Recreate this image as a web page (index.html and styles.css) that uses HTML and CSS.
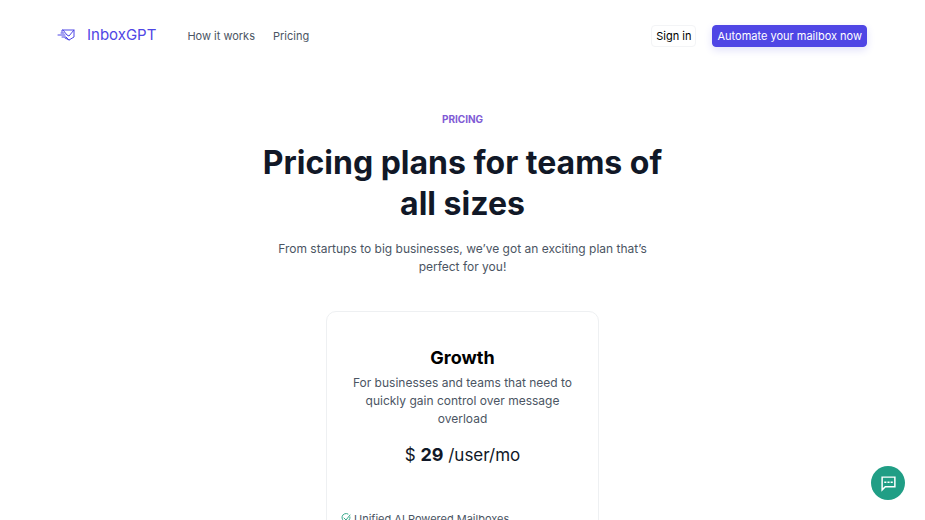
FILE: index.html
```html
<!DOCTYPE html>
<html lang="en">
<head>
    <meta charset="UTF-8">
    <meta name="viewport" content="width=device-width, initial-scale=1.0">
    <title>InboxGPT - Pricing</title>
    <link rel="stylesheet" href="styles.css">
</head>
<body>
    <header class="navbar">
        <a class="brand" href="#">
            <svg class="brand-icon" viewBox="0 0 18 12" fill="none" stroke="currentColor" stroke-linejoin="round" stroke-linecap="round" aria-hidden="true">
                <path d="M5 3V1h12v7l-5 3-4-2"/>
                <path d="M6 1l4 5 2 1 5-6"/>
                <path d="M1 6h7M4 4h3M5 8h4l3 3"/>
            </svg>
            <span>InboxGPT</span>
        </a>
        <nav class="nav-links">
            <a href="#how">How it works</a>
            <a href="#pricing">Pricing</a>
        </nav>
        <div class="nav-actions">
            <button class="btn btn-light" type="button">Sign in</button>
            <button class="btn btn-primary" type="button">Automate your mailbox now</button>
        </div>
    </header>

    <main id="pricing" class="pricing">
        <p class="eyebrow">Pricing</p>
        <h1>Pricing plans for teams of all sizes</h1>
        <p class="lead">From startups to big businesses, we’ve got an exciting plan that’s perfect for you!</p>

        <section class="plan">
            <h2>Growth</h2>
            <p class="plan-text">For businesses and teams that need to quickly gain control over message overload</p>
            <p class="price">$ <strong>29</strong> /user/mo</p>
            <ul class="features">
                <li>
                    <svg class="check" viewBox="0 0 10 10" fill="none" stroke="currentColor" stroke-linecap="round" aria-hidden="true">
                        <path d="M9 4a4 4 0 1 1-2-3"/>
                        <path d="M3 5l2 2 4-5"/>
                    </svg>
                    <span>Unified AI Powered Mailboxes</span>
                </li>
            </ul>
        </section>
    </main>

    <!-- Chat bubble -->
    <button class="chat" type="button" aria-label="Open chat">
        <svg viewBox="0 0 16 16" aria-hidden="true">
            <path d="M2 2h12v9H5l-3 3z" fill="none" stroke="currentColor" stroke-width="1.4"/>
            <path d="M4 6h2v1.500H4zM7 6h2v1.500H7zM10 6h2v1.500h-2z" fill="currentColor"/>
        </svg>
    </button>
</body>
</html>
```

FILE: styles.css
```css
* {
    box-sizing: border-box;
}
body {
    margin: 0;
    background: #fff;
    color: #111827;
    font-family: Inter, "Noto Sans", sans-serif;
    font-size: 12px;
    line-height: 18px;
}
h1, h2, p, ul {
    margin: 0;
    padding: 0;
}
a {
    color: inherit;
    text-decoration: none;
}
.navbar {
    display: flex;
    align-items: center;
    height: 72px;
    padding: 0 58px 0 57px;
}
.brand {
    display: flex;
    align-items: center;
    gap: 12px;
    padding-bottom: 3px;
    color: #4f46e5;
    font-size: 15px;
}
.brand-icon {
    width: 18px;
    height: 12px;
}
.nav-links {
    display: flex;
    gap: 18px;
    margin-left: 31px;
    color: #4b5563;
    font-size: 11px;
}
.nav-actions {
    display: flex;
    gap: 16px;
    margin-left: auto;
}
.btn {
    height: 22px;
    padding: 0 4px;
    border: 1px solid #f3f4f6;
    border-radius: 4px;
    font-family: inherit;
    font-size: 11px;
    cursor: pointer;
}
.btn-light {
    background: #fff;
    color: #000;
}
.btn-primary {
    border-color: #4f46e5;
    background: #4f46e5;
    color: #fff;
    box-shadow: 0 3px 8px #e0e0fa;
}
.pricing {
    display: flex;
    flex-direction: column;
    align-items: center;
    padding: 38px 24px;
    text-align: center;
}
.eyebrow {
    color: #805ad5;
    font-size: 10px;
    font-weight: 700;
    text-transform: uppercase;
}
h1 {
    max-width: 420px;
    margin-top: 14px;
    font-size: 32px;
    font-weight: 700;
    line-height: 41px;
}
.lead {
    max-width: 400px;
    margin-top: 16px;
    color: #4b5563;
}
.plan {
    width: 100%;
    max-width: 273px;
    margin-top: 35px;
    padding: 32px 14px;
    border: 1px solid #eef0f2;
    border-radius: 10px;
}
h2 {
    color: #000;
    font-size: 18px;
    line-height: 28px;
}
.plan-text {
    margin: 2px 8px 15px;
    color: #4b5563;
}
.price {
    font-size: 17px;
    line-height: 24px;
}
.price strong {
    font-size: 18px;
}
.features {
    margin-top: 43px;
    color: #4b5563;
    font-size: 11px;
    list-style: none;
}
.features li {
    display: flex;
    align-items: center;
    gap: 3px;
}
.check {
    width: 10px;
    height: 10px;
    margin-bottom: 3px;
    color: #38a88a;
}
.chat {
    position: fixed;
    right: 20px;
    bottom: 20px;
    display: grid;
    place-items: center;
    width: 34px;
    height: 34px;
    padding: 0;
    border: 0;
    border-radius: 50%;
    background: #209e85;
    color: #fff;
    cursor: pointer;
}
.chat svg {
    width: 17px;
    height: 17px;
}
```
